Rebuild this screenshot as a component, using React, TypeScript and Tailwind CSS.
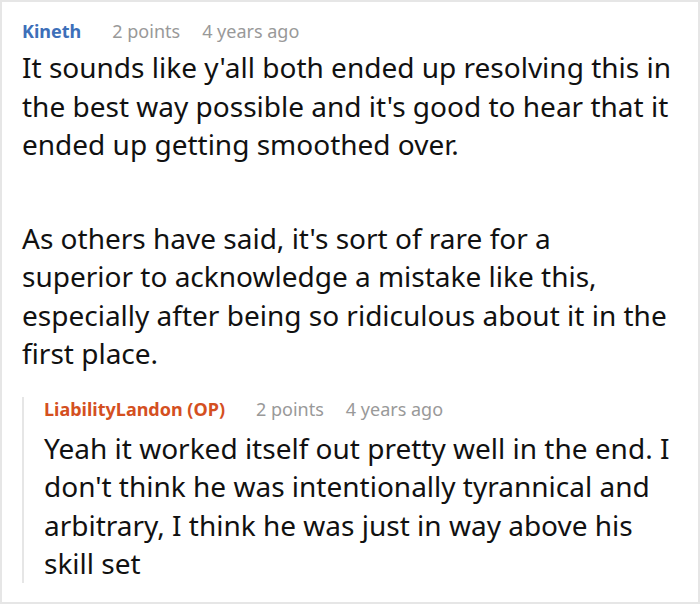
export default function App() {
  return (
    <div
      className="w-[700px] h-[604px] bg-white border-2 border-[#e6e6e6] overflow-hidden text-[#111]"
      style={{ fontFamily: '"Noto Sans", sans-serif' }}
    >
      <div className="pl-[20px] pr-[2px] pt-[16px]">
        {/* top comment */}
        <div className="flex items-center h-[26px] text-[18px]">
          <span className="font-bold text-[#3d6fb9]">Kineth</span>
          <span className="ml-[31px] text-[#999]">2 points</span>
          <span className="ml-[22px] text-[#999]">4 years ago</span>
        </div>
        <div className="text-[28px] leading-[38.5px] mt-[4px]">
          <p>
            It sounds like y'all both ended up resolving this in
            <br />
            the best way possible and it's good to hear that it
            <br />
            ended up getting smoothed over.
          </p>
          <p className="mt-[55px]">
            As others have said, it's sort of rare for a
            <br />
            superior to acknowledge a mistake like this,
            <br />
            especially after being so ridiculous about it in the
            <br />
            first place.
          </p>
        </div>

        {/* reply */}
        <div className="mt-[24px] border-l-2 border-[#e6e6e6] pl-[20px]">
          <div className="flex items-center h-[26px] text-[18px]">
            <span className="font-bold text-[#d4501f]">LiabilityLandon (OP)</span>
            <span className="ml-[31px] text-[#999]">2 points</span>
            <span className="ml-[22px] text-[#999]">4 years ago</span>
          </div>
          <p className="text-[28px] leading-[38.5px] mt-[6px]">
            Yeah it worked itself out pretty well in the end. I
            <br />
            don't think he was intentionally tyrannical and
            <br />
            arbitrary, I think he was just in way above his
            <br />
            skill set
          </p>
        </div>
      </div>
    </div>
  );
}
